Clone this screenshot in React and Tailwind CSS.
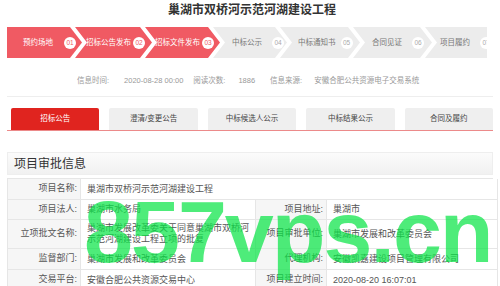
import React from 'react';

const steps = [
  { name: '预约场地', no: '01', w: 'w-[75px]', pl: 'pl-[16px]', gap: 'gap-[11px]', on: true, first: true },
  { name: '招标公告发布', no: '02', w: 'w-[77px]', pl: 'pl-[11px]', gap: 'gap-[2px]', on: true },
  { name: '招标文件发布', no: '03', w: 'w-[75px]', pl: 'pl-[10px]', gap: 'gap-[2px]', on: true },
  { name: '中标公示', no: '04', w: 'w-[74px]', pl: 'pl-[19px]', gap: 'gap-[10px]' },
  { name: '中标通知书', no: '05', w: 'w-[80px]', pl: 'pl-[18px]', gap: 'gap-[5px]' },
  { name: '合同见证', no: '06', w: 'w-[79px]', pl: 'pl-[19px]', gap: 'gap-[10px]' },
  { name: '项目履约', no: '07', w: 'w-[62px]', pl: 'pl-[15px]', gap: 'gap-[10px]', last: true },
];

const tabs = ['招标公告', '澄清/变更公告', '中标候选人公示', '中标结果公示', '合同及履约'];

const Step = ({ s }) => {
  // chevron shapes, overlapping so the gap between them shows white
  let clip = '[clip-path:polygon(0_0,calc(100%-12px)_0,100%_50%,calc(100%-12px)_100%,0_100%,12px_50%)]';
  if (s.first) clip = '[clip-path:polygon(0_0,calc(100%-12px)_0,100%_50%,calc(100%-12px)_100%,0_100%)]';
  if (s.last) clip = '[clip-path:polygon(0_0,100%_0,100%_100%,0_100%,12px_50%)]';
  return (
    <div
      className={`${s.w} ${s.pl} ${s.gap} ${clip} ${s.first ? '' : '-ml-[7px]'} h-[31px] flex items-center shrink-0 ${
        s.on ? 'bg-[#f05a63] text-white' : 'bg-[#ececec] text-[#777]'
      }`}
    >
      <span className="text-[7.5px] whitespace-nowrap">{s.name}</span>
      <span
        className={`w-[12px] h-[12px] rounded-full bg-white flex items-center justify-center text-[6.5px] shrink-0 ${
          s.on ? 'text-[#f05a63]' : 'text-[#aaa]'
        }`}
      >
        {s.no}
      </span>
    </div>
  );
};

const Label = ({ children }) => (
  <div className="bg-[#f6f6f6] border-r border-b border-[#e6e6e6] flex items-center justify-end pr-[3px] text-[#555]">
    {children}
  </div>
);

const Val = ({ children, span }) => (
  <div className={`border-r border-b border-[#e6e6e6] flex items-center pl-[6px] pr-[4px] text-[#555] leading-[11px] ${span ? 'col-span-3' : ''}`}>
    {children}
  </div>
);

export default function App() {
  return (
    <div className="relative w-[500px] h-[286px] overflow-hidden bg-white font-['Liberation_Sans','Noto_Sans_CJK_SC',sans-serif]">
      <h1 className="text-center text-[12px] font-bold text-[#333] pt-[2px] leading-[17px] pl-[4px]">巢湖市双桥河示范河湖建设工程</h1>

      <div className="flex mt-[8px] ml-[7px]">
        {steps.map((s) => (
          <Step key={s.no} s={s} />
        ))}
      </div>

      <div className="flex items-center text-[7.5px] text-[#999] mt-[18px] ml-[77px] h-[10px]">
        <span>信息时间:</span>
        <span className="ml-[15px]">2020-08-28 00:00</span>
        <span className="ml-[10px]">阅读次数:</span>
        <span className="ml-[13px]">1886</span>
        <span className="ml-[15px]">信息来源:</span>
        <span className="ml-[12px]">安徽合肥公共资源电子交易系统</span>
      </div>

      <div className="mx-[7px] mt-[10px] border-t border-[#eeeeee]" />

      <div className="mx-[7px] mt-[11px] flex gap-[10px] pl-[4px] border-b border-[#ec8a8a]">
        {tabs.map((t, i) => (
          <div
            key={t}
            className={`w-[89px] h-[22px] rounded-t-[2px] flex items-center justify-center text-[7.5px] ${
              i === 0 ? 'bg-[#e0241f] text-white' : 'bg-[#efefef] text-[#444]'
            }`}
          >
            {t}
          </div>
        ))}
      </div>

      <div className="mx-[7px] mt-[21px] h-[23px] border border-[#eeeeee] bg-gradient-to-b from-[#fbfbfb] to-[#f1f1f1] flex items-center pl-[6px] text-[12px] text-[#333]">
        项目审批信息
      </div>

      <div className="mx-[7px] mt-[3px] grid grid-cols-[73px_175px_71px_171px] grid-rows-[21px_20px_29px_21px_21px] border-t border-l border-[#e6e6e6] text-[9px]">
        <Label>项目名称:</Label>
        <Val span>巢湖市双桥河示范河湖建设工程</Val>
        <Label>项目法人:</Label>
        <Val>巢湖市水务局</Val>
        <Label>项目地址:</Label>
        <Val>巢湖市</Val>
        <Label>立项批文名称:</Label>
        <Val>巢湖市发展改革委关于同意巢湖市双桥河示范河湖建设工程立项的批复</Val>
        <Label>项目审批单位:</Label>
        <Val>巢湖市发展和改革委员会</Val>
        <Label>监督部门:</Label>
        <Val>巢湖市发展和改革委员会</Val>
        <Label>代理机构:</Label>
        <Val>安徽凯嘉建设项目管理有限公司</Val>
        <Label>交易平台:</Label>
        <Val>安徽合肥公共资源交易中心</Val>
        <Label>项目建立时间:</Label>
        <Val>2020-08-20 16:07:01</Val>
      </div>

      {/* watermark overlay */}
      <div className="absolute left-[84px] top-[188px] text-[88px] leading-[88px] font-bold tracking-[-2px] text-[rgba(10,228,70,0.72)] pointer-events-none whitespace-nowrap">
        857vps.cn
      </div>
    </div>
  );
}
